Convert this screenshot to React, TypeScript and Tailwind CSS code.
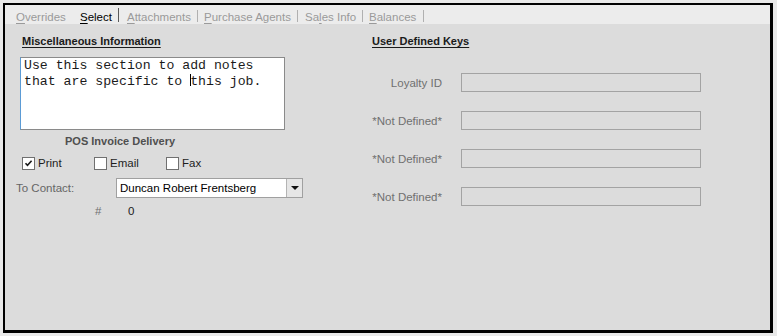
import type { ReactNode } from "react";

const SANS = "font-['Liberation_Sans',Arial,sans-serif]";

type Tab = { label: string; mnemonic: number; width: string; gap: string; active?: boolean; dark?: boolean };

const tabs: Tab[] = [
  { label: "Overrides", mnemonic: 0, width: "w-[64px]", gap: "" },
  { label: "Select", mnemonic: 0, width: "w-[38px]", gap: "mr-[8px]", active: true, dark: true },
  { label: "Attachments", mnemonic: 0, width: "w-[70px]", gap: "mr-[6px]" },
  { label: "Purchase Agents", mnemonic: 0, width: "w-[93px]", gap: "mr-[7px]" },
  { label: "Sales Info", mnemonic: 2, width: "w-[57px]", gap: "mr-[6px]" },
  { label: "Balances", mnemonic: 0, width: "w-[54px]", gap: "" },
];

function Mnemonic({ text, index }: { text: string; index: number }) {
  return (
    <>
      {text.slice(0, index)}
      <span className="underline underline-offset-[2px]">{text[index]}</span>
      {text.slice(index + 1)}
    </>
  );
}

function Checkbox({ checked, label, className }: { checked?: boolean; label: string; className?: string }) {
  return (
    <div className={`flex items-center ${className ?? ""}`}>
      <div className="flex h-[13px] w-[13px] items-center justify-center border border-[#707070] bg-white">
        {checked && (
          <svg viewBox="0 0 11 11" className="h-[11px] w-[11px]" aria-hidden>
            <path d="M2.5 5.2 L4.5 7.4 L8.6 2.8" fill="none" stroke="#1a1a1a" strokeWidth={1.6} />
          </svg>
        )}
      </div>
      <span className="ml-[3px] text-[11.5px] leading-[14px] text-[#1e1e1e]">{label}</span>
    </div>
  );
}

function KeyRow({ label, children }: { label: string; children?: ReactNode }) {
  return (
    <div className="flex h-[19px] items-center">
      <span className="w-[70px] text-right text-[11.5px] leading-[14px] text-[#707070]">{label}</span>
      <div className="ml-[19px] h-[19px] w-[240px] border border-[#a3a3a3] bg-[#dcdcdc]">{children}</div>
    </div>
  );
}

export default function App() {
  return (
    <div className={`h-[336px] w-[777px] bg-[#e9e9e9] pl-[3px] pt-[3px] ${SANS}`}>
      <div className="flex h-[330px] w-[770px] flex-col border-b-[3px] border-l-2 border-r-[3px] border-t-2 border-black">
        {/* tab strip */}
        <div className="flex h-[19px] shrink-0 bg-[#ececec] pl-[11px] pt-[5px]">
          {tabs.map((t) => (
            <div key={t.label} className={`flex ${t.gap}`}>
              <span
                className={`${t.width} text-[11.5px] leading-[14px] ${
                  t.active ? "text-black" : "text-[#9a9a9a]"
                }`}
              >
                <Mnemonic text={t.label} index={t.mnemonic} />
              </span>
              {t.label !== "Overrides" && (
                <div
                  className={
                    t.dark
                      ? "-mt-[2px] h-[14px] w-[1px] bg-[#5a5a5a]"
                      : "mt-[0px] h-[12px] w-[1px] bg-[#b0b0b0]"
                  }
                />
              )}
            </div>
          ))}
        </div>

        {/* content */}
        <div className="flex flex-1 bg-[#dcdcdc] pl-[11px]">
          {/* left column */}
          <div className="flex w-[356px] flex-col">
            <div className="ml-[6px] mt-[10px] text-[11px] font-bold leading-[14px] text-[#1a1a1a] underline underline-offset-[2px]">
              Miscellaneous Information
            </div>
            <div className="ml-[4px] mt-[9px] h-[73px] w-[265px] border border-[#8a8a8a] border-l-[#5b9bd5] bg-white pl-[3px] pt-[1px] font-['Liberation_Mono','Courier_New',monospace] text-[13.2px] leading-[14px] text-[#1a1a1a]">
              <div className="whitespace-pre">Use this section to add notes</div>
              <div className="whitespace-pre">
                that are specific to <span className="-mx-[0.5px] inline-block h-[12px] w-[1px] translate-y-[1px] bg-black" />this job.
              </div>
            </div>
            <div className="ml-[49px] mt-[4px] text-[11px] font-bold leading-[14px] text-[#4f4f4f]">
              POS Invoice Delivery
            </div>
            <div className="mt-[8px] flex">
              <Checkbox checked label="Print" className="ml-[6px] w-[72px]" />
              <Checkbox label="Email" className="w-[72px]" />
              <Checkbox label="Fax" />
            </div>
            <div className="mt-[8px] flex items-center">
              <span className="w-[100px] text-[11.5px] leading-[14px] text-[#666666]">To Contact:</span>
              <div className="flex h-[20px] w-[187px] border border-[#a0a0a0] bg-white">
                <span className="flex-1 pl-[3px] pt-[2px] text-[11.5px] leading-[14px] text-black">
                  Duncan Robert Frentsberg
                </span>
                <div className="flex w-[16px] items-center justify-center border-l border-[#b4b4b4] bg-[#e6e6e6]">
                  <svg viewBox="0 0 8 4" className="h-[4px] w-[8px]" aria-hidden>
                    <path d="M0 0 H8 L4 4 Z" fill="#111" />
                  </svg>
                </div>
              </div>
            </div>
            <div className="mt-[6px] flex text-[11.5px] leading-[14px]">
              <span className="ml-[79px] w-[33px] text-[#707070]">#</span>
              <span className="text-[#1a1a1a]">0</span>
            </div>
          </div>

          {/* right column */}
          <div className="flex flex-col">
            <div className="mt-[10px] text-[11px] font-bold leading-[14px] text-[#1a1a1a] underline underline-offset-[2px]">
              User Defined Keys
            </div>
            <div className="mt-[25px] flex flex-col gap-[19px]">
              <KeyRow label="Loyalty ID" />
              <KeyRow label="*Not Defined*" />
              <KeyRow label="*Not Defined*" />
              <KeyRow label="*Not Defined*" />
            </div>
          </div>
        </div>
      </div>
    </div>
  );
}
